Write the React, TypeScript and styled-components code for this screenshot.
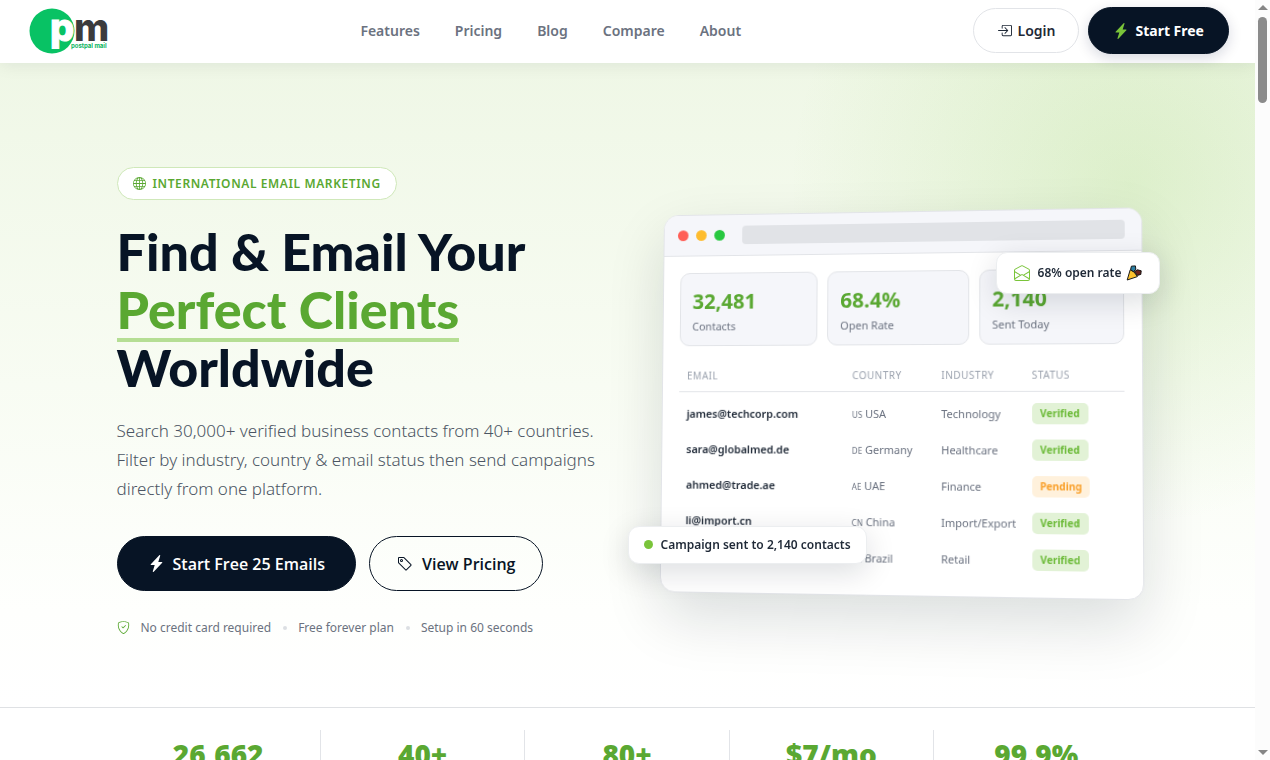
import React from "react";
import styled, { createGlobalStyle } from "styled-components";
import {
  BsBoxArrowInRight,
  BsEnvelopeOpen,
  BsGlobe,
  BsLightningChargeFill,
  BsShieldCheck,
  BsTag,
} from "react-icons/bs";

const c = {
  ink: "#071425",
  text: "#1f2937",
  muted: "#6b7280",
  faint: "#9ca3af",
  green: "#5aa832",
  lime: "#7ac43a",
  line: "#e2e4e8",
  panel: "#f5f6fa",
};

const GlobalStyle = createGlobalStyle`
  *, *::before, *::after { box-sizing: border-box; }
  body {
    margin: 0;
    background: #fff;
    color: ${c.text};
    font-family: "Noto Sans", "Open Sans", sans-serif;
  }
  a { color: inherit; text-decoration: none; }
`;

const Shell = styled.div`
  display: grid;
  grid-template-columns: minmax(0, 1fr) 15px;
  height: 100vh;
  overflow: hidden;
`;

const Page = styled.div`
  overflow: hidden;
`;

const ScrollTrack = styled.div`
  display: flex;
  flex-direction: column;
  align-items: center;
  justify-content: space-between;
  padding: 5px 0;
  background: #fcfcfc;
`;

const ScrollTop = styled.div`
  display: flex;
  flex-direction: column;
  align-items: center;
  gap: 7px;
`;

const Arrow = styled.span<{ $down?: boolean }>`
  border-left: 5px solid transparent;
  border-right: 5px solid transparent;
  ${(p) => (p.$down ? "border-top" : "border-bottom")}: 5px solid #858585;
`;

const Thumb = styled.div`
  width: 9px;
  height: 86px;
  border-radius: 5px;
  background: #8b8b8b;
`;

const Header = styled.header`
  position: relative;
  z-index: 2;
  display: flex;
  align-items: center;
  justify-content: space-between;
  height: 63px;
  padding: 0 26px 2px 29px;
  background: #fff;
  box-shadow: 0 2px 16px rgba(7, 20, 37, 0.08);
`;

const Brand = styled.a`
  display: flex;
  width: 100px;
`;

const Nav = styled.nav`
  display: flex;
  gap: 35px;
  font-size: 14px;
  font-weight: 600;
  color: ${c.muted};
`;

const Actions = styled.div`
  display: flex;
  align-items: center;
  gap: 9px;
`;

const HeaderButton = styled.button<{ $dark?: boolean }>`
  display: flex;
  align-items: center;
  gap: 6px;
  height: ${(p) => (p.$dark ? 47 : 45)}px;
  padding: 0 ${(p) => (p.$dark ? 24 : 23)}px;
  border: 1px solid ${(p) => (p.$dark ? c.ink : c.line)};
  border-radius: 24px;
  background: ${(p) => (p.$dark ? c.ink : "#fff")};
  color: ${(p) => (p.$dark ? "#fff" : c.text)};
  font-family: inherit;
  font-size: 14px;
  font-weight: ${(p) => (p.$dark ? 700 : 600)};
  box-shadow: ${(p) => (p.$dark ? "0 4px 14px rgba(7, 20, 60, 0.16)" : "none")};
  svg { color: ${(p) => (p.$dark ? c.lime : c.text)}; }
`;

const Hero = styled.section`
  padding: 104px 0 70px;
  border-bottom: 1px solid #dfe1e4;
  background:
    radial-gradient(circle 340px at 90% 19%, rgba(122, 196, 58, 0.18), rgba(122, 196, 58, 0.08) 55%, transparent),
    linear-gradient(180deg, #eff7e6 0%, #f8fcf3 50%, #fefffd 85%, #fff 100%);
`;

const Container = styled.div`
  max-width: 1102px;
  margin: 0 auto;
  padding: 0 40px;
`;

const HeroGrid = styled(Container)`
  display: grid;
  grid-template-columns: minmax(0, 1fr) minmax(0, 1fr);
  gap: 56px;
  align-items: center;
`;

const Copy = styled.div`
  display: flex;
  flex-direction: column;
  align-items: flex-start;
`;

const Badge = styled.span`
  display: inline-flex;
  align-items: center;
  gap: 7px;
  height: 33px;
  padding: 0 15px;
  border: 1px solid #cfe8b9;
  border-radius: 17px;
  background: #fff;
  color: ${c.green};
  font-size: 12px;
  font-weight: 600;
  letter-spacing: 0.05em;
  text-transform: uppercase;
`;

const Title = styled.h1`
  margin: 22px 0 0;
  font-family: Lato, Inter, sans-serif;
  font-size: 52px;
  font-weight: 900;
  line-height: 58px;
  color: ${c.ink};
  white-space: nowrap;
`;

const Highlight = styled.span`
  display: table;
  color: ${c.green};
  box-shadow: 0 4px 0 #b5de94;
`;

const Lead = styled.p`
  margin: 20px 0 0;
  font-size: 17px;
  font-weight: 300;
  line-height: 29px;
  color: #4b5563;
  white-space: nowrap;
`;

const CtaRow = styled.div`
  display: flex;
  gap: 13px;
  margin-top: 33px;
`;

const Cta = styled.button<{ $dark?: boolean }>`
  display: flex;
  align-items: center;
  gap: ${(p) => (p.$dark ? 8 : 9)}px;
  height: 55px;
  padding: 0 ${(p) => (p.$dark ? 30 : 27)}px;
  border: 1px solid ${c.ink};
  border-radius: 28px;
  background: ${(p) => (p.$dark ? c.ink : "transparent")};
  color: ${(p) => (p.$dark ? "#fff" : c.ink)};
  font-family: "Open Sans", "Noto Sans", sans-serif;
  font-size: 16px;
  font-weight: 600;
`;

const Notes = styled.ul`
  display: flex;
  align-items: center;
  gap: 12px;
  margin: 27px 0 0;
  padding: 0;
  list-style: none;
  font-size: 12px;
  line-height: 19px;
  color: ${c.muted};
  svg { color: ${c.green}; }
  li { display: flex; align-items: center; gap: 11px; }
  li + li::before {
    content: "";
    width: 4px;
    height: 4px;
    border-radius: 50%;
    background: #dcdfe3;
  }
`;

const Visual = styled.div`
  position: relative;
`;

const Mock = styled.div`
  border: 1px solid ${c.line};
  border-radius: 15px;
  background: #fff;
  overflow: hidden;
  box-shadow: 0 24px 60px rgba(7, 20, 37, 0.14);
  transform: perspective(1000px) rotateY(-5deg) rotateX(2deg);
`;

const MockBar = styled.div`
  display: flex;
  align-items: center;
  gap: 8px;
  height: 42px;
  padding: 0 16px 0 14px;
  border-bottom: 1px solid ${c.line};
  background: ${c.panel};
`;

const Dot = styled.span<{ $color: string; $small?: boolean }>`
  width: ${(p) => (p.$small ? 9 : 11)}px;
  height: ${(p) => (p.$small ? 9 : 11)}px;
  border-radius: 50%;
  background: ${(p) => p.$color};
`;

const Address = styled.div`
  flex: 1;
  height: 19px;
  margin-left: 10px;
  border-radius: 4px;
  background: #e1e3e7;
`;

const MockBody = styled.div`
  padding: 17px 17px 23px;
`;

const StatCards = styled.div`
  display: grid;
  grid-template-columns: repeat(3, 1fr);
  gap: 10px;
`;

const StatCard = styled.div`
  height: 75px;
  padding: 14px 12px 0;
  border: 1px solid ${c.line};
  border-radius: 10px;
  background: ${c.panel};
  strong {
    display: block;
    font-size: 21px;
    line-height: 28px;
    color: ${c.green};
  }
  span {
    display: block;
    margin-top: 4px;
    font-size: 11px;
    line-height: 16px;
    color: ${c.muted};
  }
`;

const Contacts = styled.table`
  width: 100%;
  margin-top: 15px;
  border-collapse: collapse;
  table-layout: fixed;
  text-align: left;
  font-size: 11px;
  th, td { padding: 0 8px; white-space: nowrap; }
  th {
    height: 31px;
    border-bottom: 1px solid ${c.line};
    font-size: 10px;
    font-weight: 400;
    letter-spacing: 0.05em;
    text-transform: uppercase;
    color: ${c.faint};
  }
  td { height: 36px; padding-top: 8px; color: ${c.muted}; }
  td:first-child { color: ${c.text}; font-weight: 600; }
  small { font-size: 8px; }
`;

const Status = styled.span<{ $pending?: boolean }>`
  display: inline-block;
  padding: 0 8px;
  border-radius: 5px;
  background: ${(p) => (p.$pending ? "#fff1dc" : "#e2f2d6")};
  color: ${(p) => (p.$pending ? "#f9a02b" : "#6dbb3a")};
  font-size: 10px;
  font-weight: 700;
  line-height: 21px;
`;

const Float = styled.div<{ $place: "top" | "bottom" }>`
  position: absolute;
  ${(p) => (p.$place === "top" ? "top: 42px; right: -21px;" : "bottom: 31px; left: -28px;")}
  display: flex;
  align-items: center;
  gap: 8px;
  height: ${(p) => (p.$place === "top" ? 42 : 38)}px;
  padding: 0 ${(p) => (p.$place === "top" ? 17 : 15)}px;
  border: 1px solid #eceef0;
  border-radius: 11px;
  background: #fff;
  color: ${c.text};
  font-size: 12px;
  font-weight: 600;
  white-space: nowrap;
  box-shadow: 0 8px 30px rgba(7, 20, 37, 0.14);
`;

const Popper = styled.span`
  display: flex;
  margin-left: -4px;
`;

const Figures = styled(Container)`
  padding-top: 22px;
  display: grid;
  grid-template-columns: repeat(5, 1fr);
`;

const Figure = styled.div`
  height: 110px;
  border-right: 1px solid ${c.line};
  text-align: center;
  font-family: "Open Sans", "Noto Sans", sans-serif;
  font-size: 28px;
  font-weight: 800;
  line-height: 48px;
  color: ${c.green};
  &:last-child { border-right: 0; }
`;

const contacts = [
  ["james@techcorp.com", "US", "USA", "Technology", "Verified"],
  ["sara@globalmed.de", "DE", "Germany", "Healthcare", "Verified"],
  ["ahmed@trade.ae", "AE", "UAE", "Finance", "Pending"],
  ["li@import.cn", "CN", "China", "Import/Export", "Verified"],
  ["ana@varejo.br", "BR", "Brazil", "Retail", "Verified"],
];

function Logo() {
  return (
    <svg width="82" height="48" viewBox="0 0 82 48" role="img" aria-label="Postpal Mail">
      <circle cx="23" cy="24" r="22.5" fill="#08c264" />
      <g fontFamily="Inter, sans-serif" fontWeight="800">
        <text x="21" y="34" fontSize="38" fill="#fff" stroke="#fff" strokeWidth="1">p</text>
        <text x="45" y="34" fontSize="38" fill="#3b3b3d">m</text>
        <text x="42" y="41" fontSize="6" fontWeight="700" fill="#08b45e">postpal mail</text>
      </g>
    </svg>
  );
}

function PartyPopper() {
  return (
    <svg width="16" height="16" viewBox="0 0 16 16" role="img" aria-label="Party popper">
      <path d="M1.2 15 4.2 4.8Q8.5 6 11.4 11.6Z" fill="#fbc12d" stroke="#1b1b1b" strokeWidth="1" strokeLinejoin="round" />
      <path d="M4.6 4.6 5.4 1.2 9.4.9 9.8 4.2 7.6 6.6Z" fill="#2b7fa5" stroke="#141414" strokeWidth="1" strokeLinejoin="round" />
      <path d="M8.4 6.6 11.4 4.8 15.2 5.8 14.8 9.4 11.4 10.4Z" fill="#6b241e" stroke="#141414" strokeWidth="1" strokeLinejoin="round" />
    </svg>
  );
}

export default function App() {
  return (
    <>
      <GlobalStyle />
      <Shell>
        <Page>
          <Header>
            <Brand href="#home"><Logo /></Brand>
            <Nav>
              {["Features", "Pricing", "Blog", "Compare", "About"].map((n) => (
                <a key={n} href={`#${n.toLowerCase()}`}>{n}</a>
              ))}
            </Nav>
            <Actions>
              <HeaderButton><BsBoxArrowInRight size={15} />Login</HeaderButton>
              <HeaderButton $dark><BsLightningChargeFill size={16} />Start Free</HeaderButton>
            </Actions>
          </Header>
          <main>
            <Hero>
              <HeroGrid>
                <Copy>
                  <Badge><BsGlobe size={13} />International Email Marketing</Badge>
                  <Title>
                    Find &amp; Email Your
                    <Highlight>Perfect Clients</Highlight>
                    Worldwide
                  </Title>
                  <Lead>
                    Search 30,000+ verified business contacts from 40+ countries.<br />
                    Filter by industry, country &amp; email status then send campaigns<br />
                    directly from one platform.
                  </Lead>
                  <CtaRow>
                    <Cta $dark><BsLightningChargeFill size={17} />Start Free 25 Emails</Cta>
                    <Cta><BsTag size={16} />View Pricing</Cta>
                  </CtaRow>
                  <Notes>
                    <li><BsShieldCheck size={13} />No credit card required</li>
                    <li>Free forever plan</li>
                    <li>Setup in 60 seconds</li>
                  </Notes>
                </Copy>
                <Visual>
                  <Mock>
                    <MockBar>
                      <Dot $color="#ff5f57" />
                      <Dot $color="#febc2e" />
                      <Dot $color="#28c840" />
                      <Address />
                    </MockBar>
                    <MockBody>
                      <StatCards>
                        <StatCard><strong>32,481</strong><span>Contacts</span></StatCard>
                        <StatCard><strong>68.4%</strong><span>Open Rate</span></StatCard>
                        <StatCard><strong>2,140</strong><span>Sent Today</span></StatCard>
                      </StatCards>
                      <Contacts>
                        <colgroup>
                          <col style={{ width: "38%" }} />
                          <col style={{ width: "20%" }} />
                          <col style={{ width: "20%" }} />
                          <col style={{ width: "22%" }} />
                        </colgroup>
                        <thead>
                          <tr><th>Email</th><th>Country</th><th>Industry</th><th>Status</th></tr>
                        </thead>
                        <tbody>
                          {contacts.map(([email, code, country, industry, status]) => (
                            <tr key={email}>
                              <td>{email}</td>
                              <td><small>{code}</small> {country}</td>
                              <td>{industry}</td>
                              <td><Status $pending={status === "Pending"}>{status}</Status></td>
                            </tr>
                          ))}
                        </tbody>
                      </Contacts>
                    </MockBody>
                  </Mock>
                  <Float $place="top">
                    <BsEnvelopeOpen size={16} color={c.lime} />68% open rate
                    <Popper><PartyPopper /></Popper>
                  </Float>
                  <Float $place="bottom"><Dot $small $color={c.lime} />Campaign sent to 2,140 contacts</Float>
                </Visual>
              </HeroGrid>
            </Hero>
            <Figures>
              {["26,662", "40+", "80+", "$7/mo", "99.9%"].map((v) => (
                <Figure key={v}>{v}</Figure>
              ))}
            </Figures>
          </main>
        </Page>
        <ScrollTrack aria-hidden="true">
          <ScrollTop><Arrow /><Thumb /></ScrollTop>
          <Arrow $down />
        </ScrollTrack>
      </Shell>
    </>
  );
}
